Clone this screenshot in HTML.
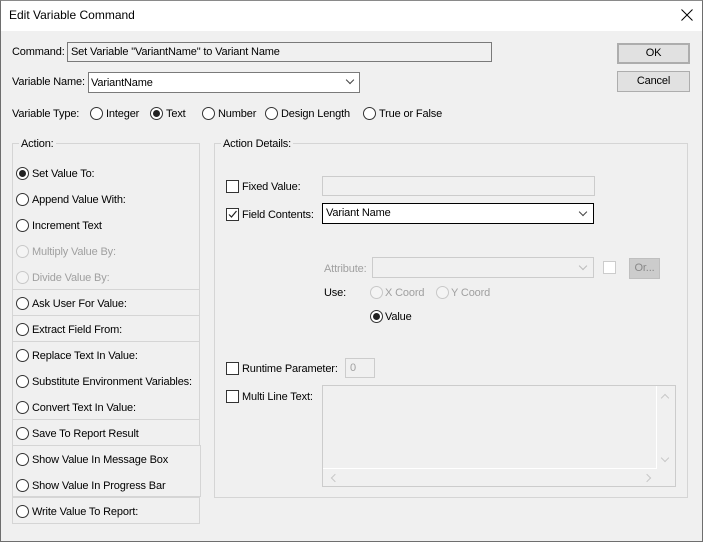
<!DOCTYPE html>
<html><head><style>
*{box-sizing:border-box;margin:0;padding:0}
body{width:703px;height:542px;background:#f0f0f0;font-family:"Liberation Sans",sans-serif;font-size:11px;letter-spacing:-0.15px;color:#000;position:relative;overflow:hidden}
.a{position:absolute;white-space:nowrap}
.win{position:absolute;left:0;top:0;width:703px;height:542px;border:1px solid #6e6e6e;border-top-color:#8a8a8a}
.title{position:absolute;left:1px;top:1px;width:701px;height:30px;background:#fff}
.r{position:absolute;width:13px;height:13px;border:1px solid #333;border-radius:50%;background:#fff}
.r.on::after{content:"";position:absolute;left:2px;top:2px;width:7px;height:7px;border-radius:50%;background:#222}
.r.dis{border-color:#c8c8c8;background:#f4f4f4}
.cb{position:absolute;width:13px;height:13px;border:1px solid #333;background:#fff}
.box{position:absolute;border:1px solid #d5d5d5}
.g{color:#a0a0a0}
.btn{position:absolute;border:1px solid #adadad;background:#e1e1e1;text-align:center;line-height:18px}
.chev{position:absolute;width:6px;height:6px;border-right:1px solid #444;border-bottom:1px solid #444;transform:rotate(45deg)}
</style></head><body>
<div class="win"></div>
<div class="title"></div>
<div class="a" style="left:9px;top:8px;font-size:12px;letter-spacing:0">Edit Variable Command</div>
<svg class="a" style="left:681px;top:9px" width="12" height="12"><path d="M0.5 0.5 L11.5 11.5 M11.5 0.5 L0.5 11.5" stroke="#000" stroke-width="1"/></svg>

<div class="a" style="left:12px;top:46px">Command:</div>
<div class="a" style="left:67px;top:42px;width:425px;height:20px;border:1px solid #7a7a7a;background:#f0f0f0;padding:3px 3px">Set Variable "VariantName" to Variant Name</div>

<div class="btn" style="left:617px;top:43px;width:73px;height:21px;border:2px solid #adadad;line-height:17px">OK</div>
<div class="btn" style="left:617px;top:71px;width:73px;height:21px">Cancel</div>

<div class="a" style="left:12px;top:76px">Variable Name:</div>
<div class="a" style="left:88px;top:72px;width:272px;height:21px;border:1px solid #7a7a7a;background:#fff;padding:4px 2px">VariantName</div>
<div class="chev" style="left:347px;top:77px"></div>

<div class="a" style="left:12px;top:108px">Variable Type:</div>
<div class="r" style="left:90px;top:107px"></div><div class="a" style="left:106px;top:108px">Integer</div>
<div class="r on" style="left:150px;top:107px"></div><div class="a" style="left:166px;top:108px">Text</div>
<div class="r" style="left:202px;top:107px"></div><div class="a" style="left:218px;top:108px">Number</div>
<div class="r" style="left:265px;top:107px"></div><div class="a" style="left:281px;top:108px">Design Length</div>
<div class="r" style="left:363px;top:107px"></div><div class="a" style="left:379px;top:108px">True or False</div>

<div class="box" style="left:12px;top:143px;width:188px;height:147px;border-bottom:none"></div>
<div class="a" style="left:19px;top:138px;background:#f0f0f0;padding:0 2px">Action:</div>
<div class="box" style="left:12px;top:289px;width:188px;height:27px"></div>
<div class="box" style="left:12px;top:315px;width:188px;height:27px"></div>
<div class="box" style="left:12px;top:341px;width:188px;height:79px"></div>
<div class="box" style="left:12px;top:419px;width:188px;height:27px"></div>
<div class="box" style="left:12px;top:445px;width:189px;height:52px"></div>
<div class="box" style="left:12px;top:497px;width:188px;height:27px"></div>

<div class="r on" style="left:16px;top:167px"></div><div class="a" style="left:32px;top:168px">Set Value To:</div>
<div class="r" style="left:16px;top:193px"></div><div class="a" style="left:32px;top:194px">Append Value With:</div>
<div class="r" style="left:16px;top:219px"></div><div class="a" style="left:32px;top:220px">Increment Text</div>
<div class="r dis" style="left:16px;top:245px"></div><div class="a g" style="left:32px;top:246px">Multiply Value By:</div>
<div class="r dis" style="left:16px;top:271px"></div><div class="a g" style="left:32px;top:272px">Divide Value By:</div>
<div class="r" style="left:16px;top:297px"></div><div class="a" style="left:32px;top:298px">Ask User For Value:</div>
<div class="r" style="left:16px;top:323px"></div><div class="a" style="left:32px;top:324px">Extract Field From:</div>
<div class="r" style="left:16px;top:349px"></div><div class="a" style="left:32px;top:350px">Replace Text In Value:</div>
<div class="r" style="left:16px;top:375px"></div><div class="a" style="left:32px;top:376px">Substitute Environment Variables:</div>
<div class="r" style="left:16px;top:401px"></div><div class="a" style="left:32px;top:402px">Convert Text In Value:</div>
<div class="r" style="left:16px;top:427px"></div><div class="a" style="left:32px;top:428px">Save To Report Result</div>
<div class="r" style="left:16px;top:453px"></div><div class="a" style="left:32px;top:454px">Show Value In Message Box</div>
<div class="r" style="left:16px;top:479px"></div><div class="a" style="left:32px;top:480px">Show Value In Progress Bar</div>
<div class="r" style="left:16px;top:505px"></div><div class="a" style="left:32px;top:506px">Write Value To Report:</div>

<div class="box" style="left:214px;top:143px;width:474px;height:355px"></div>
<div class="a" style="left:221px;top:138px;background:#f0f0f0;padding:0 2px">Action Details:</div>

<div class="cb" style="left:226px;top:180px"></div><div class="a" style="left:242px;top:181px">Fixed Value:</div>
<div class="a" style="left:322px;top:176px;width:273px;height:20px;border:1px solid #ccc;background:#f0f0f0"></div>

<div class="cb" style="left:226px;top:208px"></div>
<svg class="a" style="left:227px;top:209px" width="11" height="11"><path d="M2 5.5 L4.5 8 L9.5 2" stroke="#222" fill="none" stroke-width="1.2"/></svg>
<div class="a" style="left:242px;top:209px">Field Contents:</div>
<div class="a" style="left:322px;top:203px;width:272px;height:21px;border:1px solid #000;background:#fff;padding:3px 3px">Variant Name</div>
<div class="chev" style="left:580px;top:209px"></div>

<div class="a g" style="left:324px;top:263px">Attribute:</div>
<div class="a" style="left:372px;top:257px;width:222px;height:21px;border:1px solid #ccc;background:#f0f0f0"></div>
<div class="chev" style="left:580px;top:263px;border-color:#bbb"></div>
<div class="a" style="left:603px;top:261px;width:13px;height:13px;border:1px solid #ccc;background:#fff"></div>
<div class="a g" style="left:629px;top:258px;width:31px;height:21px;border:1px solid #bfbfbf;background:#ccc;text-align:center;line-height:19px;color:#888">Or...</div>

<div class="a" style="left:324px;top:287px">Use:</div>
<div class="r dis" style="left:370px;top:286px"></div><div class="a g" style="left:385px;top:287px">X Coord</div>
<div class="r dis" style="left:436px;top:286px"></div><div class="a g" style="left:451px;top:287px">Y Coord</div>
<div class="r on" style="left:370px;top:310px"></div><div class="a" style="left:385px;top:311px">Value</div>

<div class="cb" style="left:226px;top:362px"></div><div class="a" style="left:242px;top:363px">Runtime Parameter:</div>
<div class="a g" style="left:345px;top:358px;width:30px;height:20px;border:1px solid #ccc;padding:3px 4px">0</div>

<div class="cb" style="left:226px;top:390px"></div><div class="a" style="left:242px;top:391px">Multi Line Text:</div>
<div class="a" style="left:322px;top:385px;width:354px;height:102px;border:1px solid #ccc;background:#f0f0f0"></div>
<div class="a" style="left:656px;top:386px;width:1px;height:83px;background:#fff"></div>
<div class="a" style="left:323px;top:468px;width:334px;height:1px;background:#fff"></div>
<div class="chev" style="left:662px;top:395px;border-color:#c8c8c8;transform:rotate(225deg)"></div>
<div class="chev" style="left:662px;top:455px;border-color:#c8c8c8"></div>
<div class="chev" style="left:332px;top:475px;border-color:#c8c8c8;transform:rotate(135deg)"></div>
<div class="chev" style="left:644px;top:475px;border-color:#c8c8c8;transform:rotate(-45deg)"></div>
</body></html>
